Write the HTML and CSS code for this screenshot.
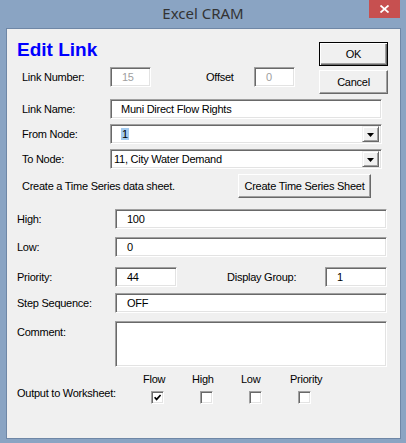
FILE: index.html
```html
<!DOCTYPE html>
<html>
<head>
<meta charset="utf-8">
<link rel="stylesheet" href="styles.css">
</head>
<body>
<div class="window">
  <div class="titlebar">
    <div class="title">Excel CRAM</div>
    <div class="close"><svg width="9" height="8" viewBox="0 0 9 8"><path d="M0.5 0.5 L8.5 7.5 M8.5 0.5 L0.5 7.5" stroke="#fff" stroke-width="1.8"/></svg></div>
  </div>
  <div class="client">
    <div class="top">
      <div class="top-left">
        <h1 class="heading">Edit Link</h1>
        <div class="row-ln">
          <span class="lbl lbl-a">Link Number:</span>
          <div class="field small disabled">15</div>
          <span class="lbl lbl-off">Offset</span>
          <div class="field small disabled">0</div>
        </div>
      </div>
      <div class="top-right">
        <div class="btn default">OK</div>
        <div class="btn">Cancel</div>
      </div>
    </div>

    <div class="rows-a">
      <div class="row">
        <span class="lbl lbl-a">Link Name:</span>
        <div class="field wide-a">Muni Direct Flow Rights</div>
      </div>
      <div class="row">
        <span class="lbl lbl-a">From Node:</span>
        <div class="field wide-a combo"><span class="combo-text"><span class="sel">1</span></span><span class="drop"><svg width="7" height="4" viewBox="0 0 7 4"><polygon points="0,0 7,0 3.5,4" fill="#000"/></svg></span></div>
      </div>
      <div class="row">
        <span class="lbl lbl-a">To Node:</span>
        <div class="field wide-a combo"><span class="combo-text tight">11, City Water Demand</span><span class="drop"><svg width="7" height="4" viewBox="0 0 7 4"><polygon points="0,0 7,0 3.5,4" fill="#000"/></svg></span></div>
      </div>
      <div class="row row-create">
        <span class="lbl lbl-create">Create a Time Series data sheet.</span>
        <div class="btn btn-create">Create Time Series Sheet</div>
      </div>
    </div>

    <div class="rows-b">
      <div class="row r-high">
        <span class="lbl lbl-b">High:</span>
        <div class="field wide-b">100</div>
      </div>
      <div class="row r-low">
        <span class="lbl lbl-b">Low:</span>
        <div class="field wide-b">0</div>
      </div>
      <div class="row r-prio">
        <span class="lbl lbl-b">Priority:</span>
        <div class="field short">44</div>
        <span class="lbl lbl-dg">Display Group:</span>
        <div class="field short">1</div>
      </div>
      <div class="row r-step">
        <span class="lbl lbl-b">Step Sequence:</span>
        <div class="field wide-b">OFF</div>
      </div>
      <div class="row r-comment">
        <span class="lbl lbl-b lbl-top">Comment:</span>
        <div class="field wide-b area"></div>
      </div>
      <div class="output">
        <span class="lbl lbl-out">Output to Worksheet:</span>
        <div class="checks">
          <div class="chk-col"><span class="chk-head">Flow</span><span class="chk"><svg width="7" height="7" viewBox="0 0 7 7"><polyline points="0.6,3.2 2.6,5.4 6.6,1" fill="none" stroke="#000" stroke-width="1.7"/></svg></span></div>
          <div class="chk-col"><span class="chk-head">High</span><span class="chk"></span></div>
          <div class="chk-col"><span class="chk-head">Low</span><span class="chk"></span></div>
          <div class="chk-col"><span class="chk-head">Priority</span><span class="chk"></span></div>
        </div>
      </div>
    </div>
  </div>
</div>
</body>
</html>
```
FILE: styles.css
```css
body {
  margin: 0;
  background: #8aa4c3;
  font-family: "Liberation Sans", Arial, sans-serif;
  font-size: 11px;
  letter-spacing: -0.25px;
  color: #000;
}
.window {
  width: 406px;
  height: 443px;
  overflow: hidden;
}
.titlebar {
  height: 28px;
  display: grid;
  grid-template-columns: 1fr auto 1fr;
  align-items: start;
}
.title {
  grid-column: 2;
  font-family: "Noto Sans", sans-serif;
  font-size: 15px;
  letter-spacing: 0;
  line-height: 26px;
  color: #333;
}
.close {
  grid-column: 3;
  justify-self: end;
  margin-right: 6px;
  width: 31px;
  height: 18px;
  background: #c75050;
  display: flex;
  align-items: center;
  justify-content: center;
}
.client {
  margin-left: 6px;
  width: 395px;
  height: 411px;
  box-sizing: border-box;
  border: 1px solid #6f87a6;
  background: #f0f0f0;
  padding-top: 10px;
}
.top {
  display: flex;
  height: 55px;
}
.top-left {
  flex: 1;
  padding-left: 10px;
}
.heading {
  margin: 0;
  font-family: "Liberation Sans", Arial, sans-serif;
  font-weight: bold;
  font-size: 19px;
  line-height: 22px;
  letter-spacing: 0;
  color: #0000ff;
}
.row-ln {
  display: flex;
  align-items: center;
  height: 20px;
  margin-top: 6px;
  padding-left: 5px;
}
.top-right {
  display: flex;
  flex-direction: column;
  gap: 4px;
  padding-top: 3px;
  width: 69px;
  margin-right: 12px;
}
.lbl {
  line-height: 13px;
  white-space: nowrap;
  flex: none;
}
.lbl-a { width: 88px; }
.lbl-b { width: 98px; }
.lbl-off { width: 48px; margin-left: 55px; }
.lbl-dg { width: 98px; margin-left: 50px; }
.lbl-create { width: 216px; }
.lbl-top { align-self: flex-start; padding-top: 5px; }

.field {
  box-sizing: border-box;
  height: 20px;
  background: #fff;
  border: 1px solid;
  border-color: #a0a0a0 #fff #fff #a0a0a0;
  box-shadow: inset 1px 1px 0 #696969, inset -1px -1px 0 #e3e3e3;
  padding: 2px 0 0 10px;
  line-height: 15px;
  white-space: nowrap;
  flex: none;
}
.field.small { width: 41px; }
.field.disabled { color: #a0a0a0; padding-left: 11px; }
.field.wide-a { width: 272px; padding-left: 10px; }
.field.wide-b { width: 272px; padding-left: 11px; }
.field.short { width: 62px; padding-left: 11px; }
.field.area { height: 46px; }
.field.combo {
  display: flex;
  align-items: center;
  padding: 1px 1px 1px 10px;
}
.combo-text { flex: 1; line-height: 14px; }
.combo-text.tight { margin-left: -7px; }
.sel { background: #a3cbf0; padding: 0 1px; }
.drop {
  box-sizing: border-box;
  width: 17px;
  height: 16px;
  margin-right: 1px;
  background: #f0f0f0;
  border: 1px solid;
  border-color: #f0f0f0 #696969 #696969 #f0f0f0;
  box-shadow: inset 1px 1px 0 #fff, inset -1px -1px 0 #a0a0a0;
  display: flex;
  align-items: center;
  justify-content: center;
  padding-top: 1px;
}

.btn {
  box-sizing: border-box;
  height: 24px;
  background: #f0f0f0;
  border: 1px solid;
  border-color: #fff #696969 #696969 #fff;
  box-shadow: inset -1px -1px 0 #a0a0a0;
  display: flex;
  align-items: center;
  justify-content: center;
  font-size: 11px;
  white-space: nowrap;
}
.btn.default {
  border: 1px solid #000;
  box-shadow: inset 1px 1px 0 #fff, inset -1px -1px 0 #696969, inset -2px -2px 0 #a0a0a0;
}
.btn-create { width: 133px; flex: none; }

.rows-a { padding-left: 15px; }
.rows-b { padding-left: 10px; }
.row {
  display: flex;
  align-items: center;
  height: 20px;
  margin-top: 5px;
}
.row-create { height: 24px; }
.r-high { margin-top: 11px; }
.r-low { margin-top: 8px; }
.r-prio { margin-top: 10px; }
.r-step { margin-top: 6px; }
.r-comment { margin-top: 8px; height: 46px; align-items: flex-start; }

.output {
  display: flex;
  margin-top: 6px;
}
.lbl-out { width: 126px; padding-top: 14px; }
.checks {
  display: grid;
  grid-template-columns: repeat(4, 49px);
}
.chk-col {
  display: flex;
  flex-direction: column;
  align-items: flex-start;
}
.chk-head { line-height: 13px; }
.chk {
  box-sizing: border-box;
  width: 13px;
  height: 13px;
  margin: 5px 0 0 8px;
  background: #fff;
  border: 1px solid;
  border-color: #a0a0a0 #fff #fff #a0a0a0;
  box-shadow: inset 1px 1px 0 #696969, inset -1px -1px 0 #e3e3e3;
  display: flex;
  align-items: center;
  justify-content: center;
}
```
